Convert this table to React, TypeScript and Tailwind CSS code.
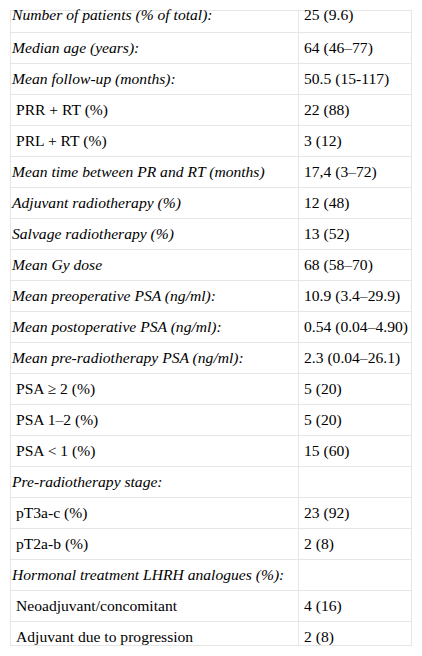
import { ReactNode } from 'react'

type Row = {
    label: string
    value: string
    italic?: boolean
    indent?: boolean
}

const rows: Row[] = [
    { label: 'Number of patients (% of total):', value: '25 (9.6)', italic: true },
    { label: 'Median age (years):', value: '64 (46–77)', italic: true },
    { label: 'Mean follow-up (months):', value: '50.5 (15-117)', italic: true },
    { label: 'PRR + RT (%)', value: '22 (88)', indent: true },
    { label: 'PRL + RT (%)', value: '3 (12)', indent: true },
    { label: 'Mean time between PR and RT (months)', value: '17,4 (3–72)', italic: true },
    { label: 'Adjuvant radiotherapy (%)', value: '12 (48)', italic: true },
    { label: 'Salvage radiotherapy (%)', value: '13 (52)', italic: true },
    { label: 'Mean Gy dose', value: '68 (58–70)', italic: true },
    { label: 'Mean preoperative PSA (ng/ml):', value: '10.9 (3.4–29.9)', italic: true },
    { label: 'Mean postoperative PSA (ng/ml):', value: '0.54 (0.04–4.90)', italic: true },
    { label: 'Mean pre-radiotherapy PSA (ng/ml):', value: '2.3 (0.04–26.1)', italic: true },
    { label: 'PSA ≥ 2 (%)', value: '5 (20)', indent: true },
    { label: 'PSA 1–2 (%)', value: '5 (20)', indent: true },
    { label: 'PSA < 1 (%)', value: '15 (60)', indent: true },
    { label: 'Pre-radiotherapy stage:', value: '', italic: true },
    { label: 'pT3a-c (%)', value: '23 (92)', indent: true },
    { label: 'pT2a-b (%)', value: '2 (8)', indent: true },
    { label: 'Hormonal treatment LHRH analogues (%):', value: '', italic: true },
    { label: 'Neoadjuvant/concomitant', value: '4 (16)', indent: true },
    { label: 'Adjuvant due to progression', value: '2 (8)', indent: true },
]

function Cell({ children, className }: { children: ReactNode; className?: string }) {
    return <div className={`h-full whitespace-nowrap ${className ?? ''}`}>{children}</div>
}

export default function App() {
    return (
        <div className="w-[422px] h-[656px] bg-white overflow-hidden pt-[10px] pl-[10px] text-black text-[15.6px] font-['Liberation_Serif']">
            <div className="w-[402px] border border-[#e6e6e6]">
                {rows.map((row, i) => {
                    const first = i === 0
                    const last = i === rows.length - 1
                    const height = first ? 'h-[21px]' : last ? 'h-[24px] border-t overflow-hidden' : 'h-[31px] border-t'
                    // first row is scrolled up a bit in the original
                    const line = first ? 'leading-[16px] -mt-[4px]' : 'leading-[30px]'
                    return (
                        <div key={i} className={`flex border-[#e6e6e6] ${height}`}>
                            <Cell className={`w-[288px] border-r border-[#e6e6e6] ${row.indent ? 'pl-[5px]' : 'pl-[1px]'}`}>
                                <div className={`${line} ${row.italic ? 'italic' : ''}`}>{row.label}</div>
                            </Cell>
                            <Cell className="flex-1 pl-[5px]">
                                <div className={line}>{row.value}</div>
                            </Cell>
                        </div>
                    )
                })}
            </div>
        </div>
    )
}
